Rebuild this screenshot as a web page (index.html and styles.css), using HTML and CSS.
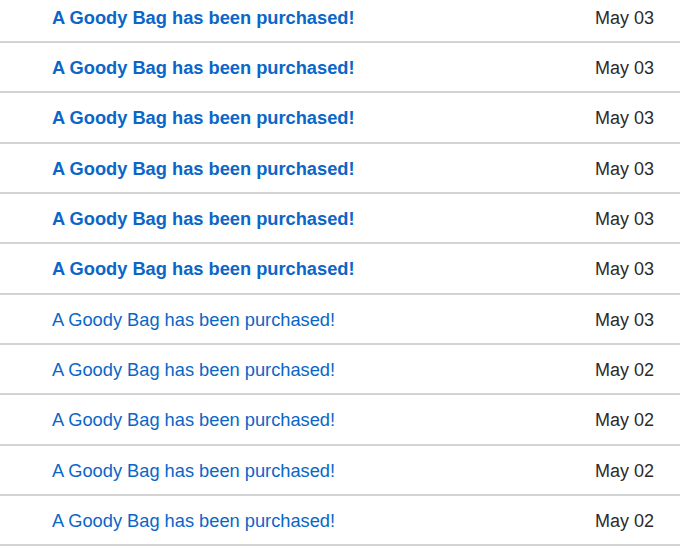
FILE: index.html
```html
<!DOCTYPE html>
<html lang="en">
<head>
<meta charset="utf-8">
<title>Notifications</title>
<link rel="stylesheet" href="styles.css">
</head>
<body>
<ul class="feed">
  <li class="item unread"><a class="title" href="#">A Goody Bag has been purchased!</a><span class="date">May 03</span></li>
  <li class="item unread"><a class="title" href="#">A Goody Bag has been purchased!</a><span class="date">May 03</span></li>
  <li class="item unread"><a class="title" href="#">A Goody Bag has been purchased!</a><span class="date">May 03</span></li>
  <li class="item unread"><a class="title" href="#">A Goody Bag has been purchased!</a><span class="date">May 03</span></li>
  <li class="item unread"><a class="title" href="#">A Goody Bag has been purchased!</a><span class="date">May 03</span></li>
  <li class="item unread"><a class="title" href="#">A Goody Bag has been purchased!</a><span class="date">May 03</span></li>
  <li class="item"><a class="title" href="#">A Goody Bag has been purchased!</a><span class="date">May 03</span></li>
  <li class="item"><a class="title" href="#">A Goody Bag has been purchased!</a><span class="date">May 02</span></li>
  <li class="item"><a class="title" href="#">A Goody Bag has been purchased!</a><span class="date">May 02</span></li>
  <li class="item"><a class="title" href="#">A Goody Bag has been purchased!</a><span class="date">May 02</span></li>
  <li class="item"><a class="title" href="#">A Goody Bag has been purchased!</a><span class="date">May 02</span></li>
</ul>
</body>
</html>
```
FILE: styles.css
```css
html, body {
  margin: 0;
  padding: 0;
  background: #ffffff;
  overflow: hidden;
}

body {
  font-family: "Liberation Sans", Arial, Helvetica, sans-serif;
}

.feed {
  list-style: none;
  margin: -7.33px 0 0 0;
  padding: 0;
}

.item {
  display: flex;
  align-items: center;
  justify-content: space-between;
  box-sizing: border-box;
  height: 50.33px;
  padding: 2px 26px 0 52px;
  border-bottom: 2px solid #d3d3d3;
}

.title {
  color: #0a66c8;
  font-size: 18.25px;
  line-height: 22px;
  text-decoration: none;
}

.unread .title {
  font-weight: bold;
}

.date {
  color: #2b2b2b;
  font-size: 18px;
  line-height: 22px;
}
```
